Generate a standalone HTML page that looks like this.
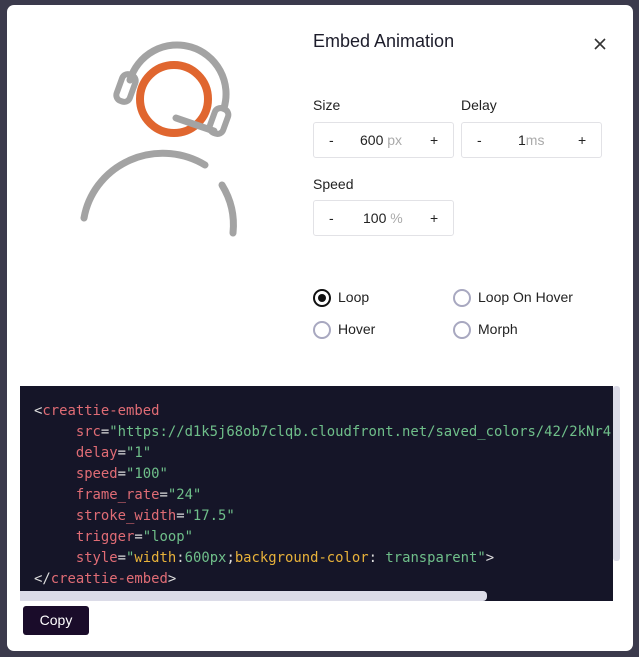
<!DOCTYPE html>
<html><head><meta charset="utf-8"><style>
html,body{margin:0;padding:0}
body{width:639px;height:657px;background:#3b3a4c;position:relative;overflow:hidden;font-family:"Liberation Sans",sans-serif}
.modal{position:absolute;left:7px;top:5px;width:626px;height:646px;background:#fff;border-radius:7px}
.title{position:absolute;left:313px;top:31px;font-size:18px;color:#1d1d2b}
.lbl{position:absolute;font-size:14px;color:#222}
.box{position:absolute;height:34px;border:1px solid #e2e2e6;border-radius:3px;font-size:14px;color:#222}
.box span{position:absolute;top:9px}
.u{color:#aaa}
.radio{position:absolute;font-size:14px;color:#222}
.radio i{position:absolute;left:0;top:0;width:14px;height:14px;border:2px solid #a8a8c0;border-radius:50%}
.radio.on i{border-color:#111}
.radio.on i:after{content:"";position:absolute;left:3px;top:3px;width:8px;height:8px;border-radius:50%;background:#111}
.radio b{font-weight:normal;position:absolute;left:25px;top:0;white-space:nowrap}
.code{position:absolute;left:20px;top:386px;width:593px;height:215px;background:#151528;overflow:hidden;font-family:"DejaVu Sans Mono","Liberation Mono",monospace;font-size:13.9px;line-height:21px;color:#ddd}
.code pre{margin:0;position:absolute;left:14px;top:15px;font:inherit;white-space:pre}
.t{color:#e06c75}.s{color:#6fbf8a}.y{color:#e8b23a}
.hs{position:absolute;left:20px;top:591px;width:467px;height:10px;background:#dcdce8;border-radius:0 4px 4px 0}
.vs{position:absolute;left:613px;top:386px;width:7px;height:175px;background:#dcdce8;border-radius:3px}
.copy{position:absolute;left:23px;top:606px;width:66px;height:29px;background:#1a0c2a;color:#fff;border-radius:3px;font-size:14px;text-align:center;line-height:29px}
</style></head><body>
<div class="modal"></div>
<svg style="position:absolute;left:0;top:0" width="320" height="260" fill="none" stroke-linecap="round">
<path d="M130 80 A47 47 0 0 1 224 108" stroke="#a3a3a3" stroke-width="7"/>
<rect x="-7" y="-14" width="14" height="28" rx="6" transform="translate(126 88) rotate(20)" stroke="#a3a3a3" stroke-width="6"/>
<rect x="-7" y="-13" width="14" height="26" rx="6" transform="translate(219 121) rotate(20)" stroke="#a3a3a3" stroke-width="6"/>
<circle cx="174" cy="99" r="34" stroke="#e0662f" stroke-width="8"/>
<path d="M176 118 L214 131" stroke="#a3a3a3" stroke-width="7"/>
<path d="M84 218 A80 78 0 0 1 205 165" stroke="#a3a3a3" stroke-width="7"/>
<path d="M222 185 A80 78 0 0 1 233 233" stroke="#a3a3a3" stroke-width="7"/>
</svg>
<div class="title">Embed Animation</div>
<svg style="position:absolute;left:594px;top:38px" width="12" height="12" stroke="#333" stroke-width="1.6"><path d="M1 1L11 11M11 1L1 11"/></svg>
<div class="lbl" style="left:313px;top:97px">Size</div>
<div class="lbl" style="left:461px;top:97px">Delay</div>
<div class="lbl" style="left:313px;top:176px">Speed</div>
<div class="box" style="left:313px;top:122px;width:139px"><span style="left:15px">-</span><span style="left:46px">600 <span class="u" style="position:static">px</span></span><span style="left:116px">+</span></div>
<div class="box" style="left:461px;top:122px;width:139px"><span style="left:15px">-</span><span style="left:56px">1<span class="u" style="position:static">ms</span></span><span style="left:116px">+</span></div>
<div class="box" style="left:313px;top:200px;width:139px"><span style="left:15px">-</span><span style="left:49px">100 <span class="u" style="position:static">%</span></span><span style="left:116px">+</span></div>
<div class="radio on" style="left:313px;top:289px"><i></i><b>Loop</b></div>
<div class="radio" style="left:453px;top:289px"><i></i><b>Loop On Hover</b></div>
<div class="radio" style="left:313px;top:321px"><i></i><b>Hover</b></div>
<div class="radio" style="left:453px;top:321px"><i></i><b>Morph</b></div>
<div class="code"><pre>&lt;<span class="t">creattie-embed</span>
     <span class="t">src</span>=<span class="s">"https://d1k5j68ob7clqb.cloudfront.net/saved_colors/42/2kNr4</span>
     <span class="t">delay</span>=<span class="s">"1"</span>
     <span class="t">speed</span>=<span class="s">"100"</span>
     <span class="t">frame_rate</span>=<span class="s">"24"</span>
     <span class="t">stroke_width</span>=<span class="s">"17.5"</span>
     <span class="t">trigger</span>=<span class="s">"loop"</span>
     <span class="t">style</span>=<span class="s">"</span><span class="y">width</span>:<span class="s">600px</span>;<span class="y">background-color</span>: <span class="s">transparent"</span>&gt;
&lt;/<span class="t">creattie-embed</span>&gt;</pre></div>
<div class="hs"></div>
<div class="vs"></div>
<div class="copy">Copy</div>
</body></html>
